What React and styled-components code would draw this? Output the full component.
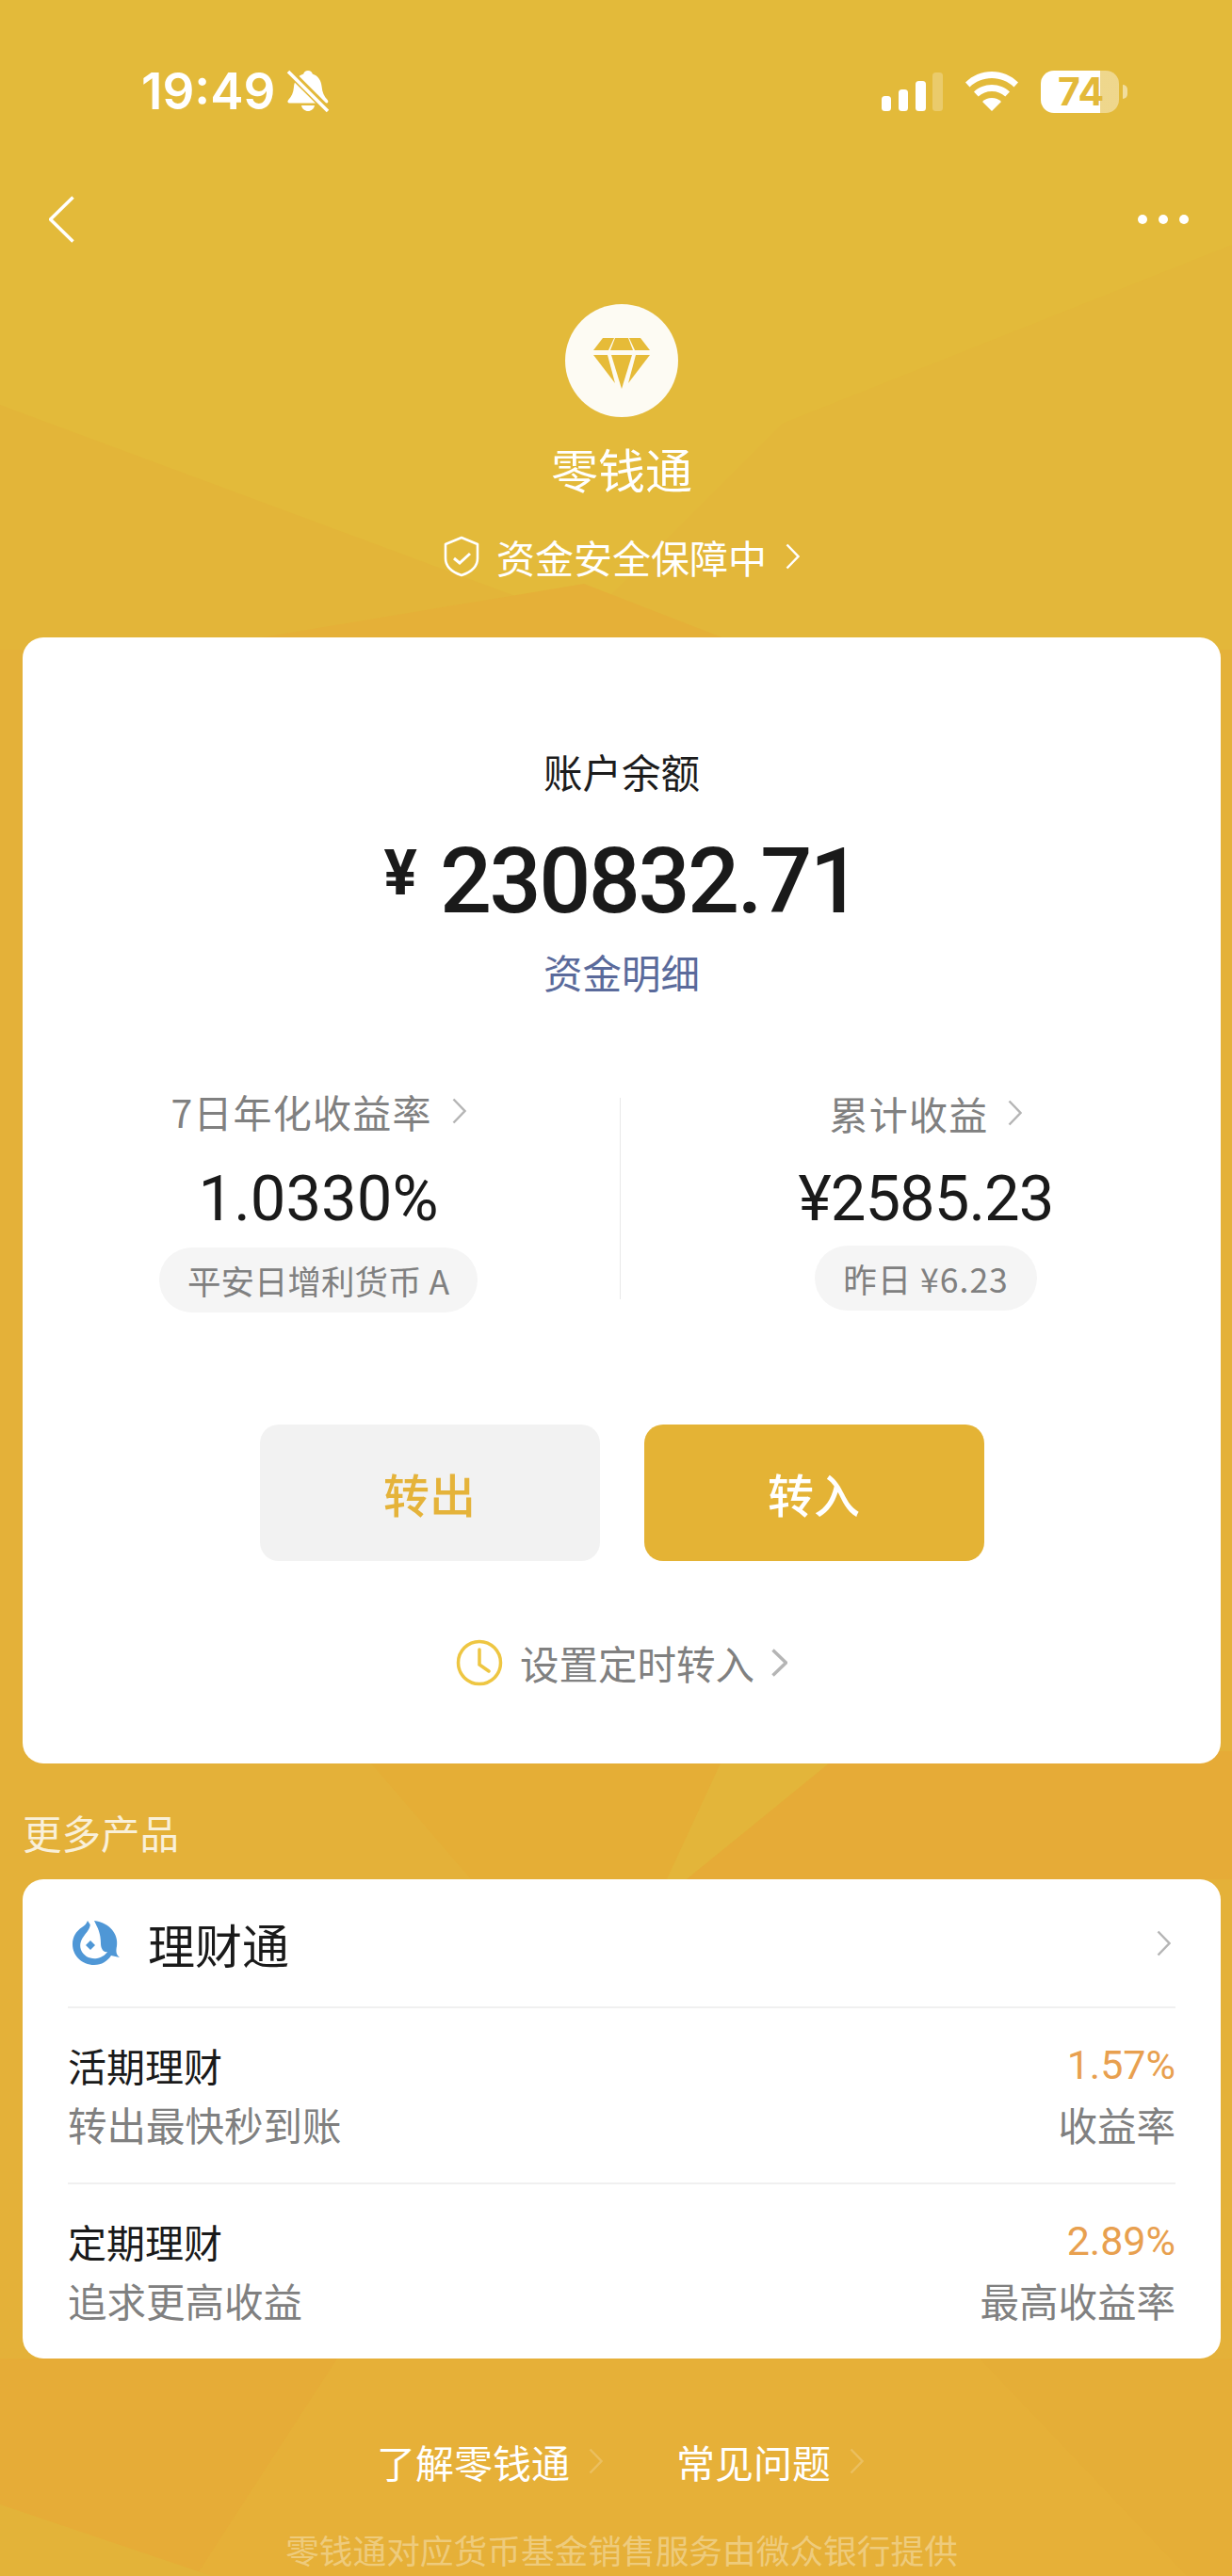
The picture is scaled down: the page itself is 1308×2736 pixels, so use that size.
import React from "react";
import styled, { createGlobalStyle } from "styled-components";

const Global = createGlobalStyle`
  html, body { margin: 0; padding: 0; background: #E5B238; }
  * { box-sizing: border-box; }
`;

const CJK = `"Noto Sans CJK SC", "Noto Sans", sans-serif`;
const NUM = `Roboto, "Noto Sans CJK SC", sans-serif`;

const Page = styled.div`
  position: relative;
  width: 1308px;
  height: 2736px;
  overflow: hidden;
  font-family: ${CJK};
  background: linear-gradient(180deg, #E3BA3A 0 690px, #E4B139 690px 2505px, #E6B038 2505px 100%);
`;
const Backdrop = styled.svg`
  position: absolute;
  inset: 0;
  width: 1308px;
  height: 2736px;
`;
const Content = styled.div`
  position: relative;
  display: flex;
  flex-direction: column;
`;

const StatusBar = styled.div`
  height: 190px;
  padding: 73px 120px 0 150px;
  display: flex;
  justify-content: space-between;
  align-items: flex-start;
`;
const StatusLeft = styled.div`
  display: flex;
  align-items: center;
  gap: 12px;
  height: 48px;
`;
const Clock = styled.span`
  font-family: Inter, sans-serif;
  font-weight: 600;
  font-size: 53px;
  line-height: 48px;
  color: #fff;
`;
const StatusRight = styled.div`
  display: flex;
  align-items: center;
  height: 48px;
  gap: 23px;
`;
const Battery = styled.div`
  position: relative;
  width: 83px;
  height: 45px;
  border-radius: 14px;
  background: linear-gradient(90deg, #fff 0 76%, rgba(255,255,255,.42) 76% 100%);
  display: flex;
  align-items: center;
  padding-left: 18px;
  font-family: Inter, sans-serif;
  font-weight: 700;
  font-size: 41px;
  color: #E3B93A;
  &::after {
    content: "";
    position: absolute;
    left: 87px;
    top: 15px;
    width: 5px;
    height: 15px;
    border-radius: 0 5px 5px 0;
    background: rgba(255,255,255,.5);
  }
`;

const Nav = styled.div`
  height: 86px;
  padding: 0 46px 0 52px;
  display: flex;
  justify-content: space-between;
  align-items: center;
`;
const Dots = styled.div`
  display: flex;
  gap: 12px;
`;
const Dot = styled.i`
  width: 10px;
  height: 10px;
  border-radius: 50%;
  background: #fff;
`;

const Hero = styled.div`
  display: flex;
  flex-direction: column;
  align-items: center;
  padding: 47px 0 0 12px;
`;
const LogoCircle = styled.div`
  width: 120px;
  height: 120px;
  border-radius: 50%;
  background: #FDFBF3;
  display: flex;
  align-items: center;
  justify-content: center;
  padding-top: 6px;
`;
const HeroTitle = styled.div`
  margin-top: 24px;
  font-size: 50px;
  line-height: 60px;
  color: #fff;
`;
const Safety = styled.div`
  margin-top: 39px;
  height: 50px;
  display: flex;
  align-items: center;
  font-size: 41px;
  line-height: 50px;
  color: #fff;
`;

const Card = styled.div`
  margin: 0 12px 0 24px;
  background: #fff;
  border-radius: 22px;
`;
const BalanceCard = styled(Card)`
  margin-top: 61px;
  height: 1196px;
  padding-top: 117px;
  display: flex;
  flex-direction: column;
  align-items: center;
`;
const BalanceLabel = styled.div`
  font-size: 41.500px;
  line-height: 50px;
  color: #1c1c1c;
`;
const Amount = styled.div`
  margin-top: 37px;
  display: flex;
  align-items: center;
  gap: 24px;
  height: 110px;
  font-family: ${NUM};
  color: #1a1a1a;
`;
const AmountYen = styled.span`
  font-size: 66px;
  font-weight: 700;
  line-height: 110px;
  position: relative;
  top: -8px;
`;
const AmountValue = styled.span`
  font-size: 97px;
  font-weight: 500;
  line-height: 110px;
  letter-spacing: -2.500px;
`;
const DetailLink = styled.div`
  margin-top: 16px;
  font-size: 41.500px;
  line-height: 50px;
  color: #5A6A9B;
`;

const Stats = styled.div`
  margin-top: 98px;
  width: 100%;
  display: grid;
  grid-template-columns: 628px 1px 1fr;
  column-gap: 6px;
`;
const StatCol = styled.div`
  display: flex;
  flex-direction: column;
  align-items: center;
  padding-top: ${p => p.$right ? 2 : 0}px;
  padding-left: ${p => p.$right ? 5 : 0}px;
`;
const StatDivider = styled.div`
  margin-top: 11px;
  height: 214px;
  background: #E9E9E9;
`;
const StatLabel = styled.div`
  height: 50px;
  display: flex;
  align-items: center;
  gap: 21px;
  font-size: 41px;
  line-height: 50px;
  letter-spacing: 1.200px;
  color: #808080;
`;
const StatValue = styled.div`
  margin-top: ${p => p.$right ? 26 : 28}px;
  font-family: ${NUM};
  font-size: 67px;
  line-height: 80px;
  font-weight: 400;
  letter-spacing: ${p => p.$right ? -1 : 0}px;
  color: #1a1a1a;
`;
const Pill = styled.div`
  margin-top: ${p => p.$right ? 10 : 12}px;
  height: 69px;
  padding: 0 30px;
  border-radius: 35px;
  background: #F5F5F5;
  display: flex;
  align-items: center;
  font-size: 35.500px;
  letter-spacing: ${p => p.$right ? 1 : 0}px;
  color: #808080;
`;

const Actions = styled.div`
  margin-top: 119px;
  display: flex;
  gap: 47px;
`;
const ActionButton = styled.div`
  width: 361px;
  height: 145px;
  border-radius: 20px;
  display: flex;
  align-items: center;
  justify-content: center;
  font-size: 49px;
  font-weight: 500;
  background: ${p => p.$primary ? "#E4B335" : "#F2F2F2"};
  color: ${p => p.$primary ? "#fff" : "#E5B33A"};
`;
const ScheduleRow = styled.div`
  margin-top: 83px;
  height: 50px;
  display: flex;
  align-items: center;
  gap: 18px;
  font-size: 41.500px;
  line-height: 50px;
  color: #808080;
`;

const SectionLabel = styled.div`
  margin-top: 48px;
  padding-left: 24px;
  font-size: 41.500px;
  line-height: 50px;
  color: rgba(255,255,255,.82);
`;
const ProductCard = styled(Card)`
  margin-top: 25px;
  height: 509px;
  padding: 0 48px;
`;
const ProductHead = styled.div`
  height: 135px;
  padding: 0 5px;
  display: flex;
  align-items: center;
  gap: 30px;
`;
const ProductName = styled.div`
  flex: 1;
  font-size: 50px;
  line-height: 60px;
  color: #1a1a1a;
`;
const ProductRow = styled.div`
  height: 187px;
  border-top: 2px solid #F0F0F0;
  padding-top: 35px;
  display: grid;
  grid-template-columns: 1fr auto;
  grid-auto-rows: 50px;
  align-content: start;
  row-gap: 13px;
`;
const RowTitle = styled.div`
  font-size: 41px;
  line-height: 50px;
  color: #1a1a1a;
`;
const RowRate = styled.div`
  font-family: ${NUM};
  font-size: 43px;
  line-height: 50px;
  text-align: right;
  color: #E8A04F;
`;
const RowSub = styled.div`
  font-size: 41.500px;
  line-height: 50px;
  color: #808080;
  text-align: ${p => p.$end ? "right" : "left"};
`;

const FooterLinks = styled.div`
  margin-top: 84px;
  height: 50px;
  padding-left: 400px;
  display: flex;
  align-items: center;
  font-size: 41px;
  line-height: 50px;
  color: #fff;
`;
const FooterLink = styled.div`
  display: flex;
  align-items: center;
  gap: 20px;
  margin-right: 78px;
`;
const FooterNote = styled.div`
  margin-top: 44px;
  padding-left: 12px;
  text-align: center;
  font-size: 35.700px;
  line-height: 50px;
  color: rgba(255,255,255,.36);
`;

const Chevron = ({ w = 15, h = 28, color = "#fff", sw = 2.5, dir = "right", ...r }) => (
  <svg width={w} height={h} viewBox={`0 0 ${w} ${h}`} fill="none" {...r}>
    <polyline
      points={dir === "right" ? `1.5,1.5 ${w - 1.5},${h / 2} 1.5,${h - 1.5}` : `${w - 1.5},1.5 1.5,${h / 2} ${w - 1.5},${h - 1.5}`}
      stroke={color}
      strokeWidth={sw}
    />
  </svg>
);

const BellOff = () => (
  <svg width="46" height="46" viewBox="0 0 46 46">
    <path d="M23 1c2.6 0 4.4 1.6 4.8 3.6C34 6.6 37 12 37.6 18c.5 6 2.6 10.600 6 14 1.300 1.400 1 3.500-1 3.500H3.500c-2.300 0-2.700-2.100-1.300-3.500 3.400-3.400 5.300-7.500 5.700-13C8.400 12 12 6.500 18.200 4.600 18.600 2.600 20.400 1 23 1z" fill="#fff" />
    <path d="M16 38h14c-.6 3.600-3.600 6-7 6s-6.400-2.400-7-6z" fill="#fff" />
    <line x1="2" y1="1" x2="45" y2="44" stroke="#E3B93A" strokeWidth="8" />
    <line x1="2" y1="2" x2="44" y2="44" stroke="#fff" strokeWidth="3.500" />
  </svg>
);

const Signal = () => (
  <svg width="65" height="41" viewBox="0 0 65 41">
    <rect x="0" y="25" width="10" height="16" rx="3.500" fill="#fff" />
    <rect x="18" y="18" width="10" height="23" rx="3.500" fill="#fff" />
    <rect x="36" y="9" width="11" height="32" rx="3.500" fill="#fff" />
    <rect x="54" y="0" width="11" height="41" rx="3.500" fill="#fff" fillOpacity=".25" />
  </svg>
);

const Wifi = () => (
  <svg width="58" height="42" viewBox="0 0 58 42">
    <path d="M29 0C18 0 8.500 4.200 1 11.500l4.500 5C11.800 10.500 20 7 29 7s17.200 3.500 23.500 9.500l4.500-5C49.500 4.200 40 0 29 0z" fill="#fff" />
    <path d="M29 14c-7.500 0-14 2.800-19 7.500l4.700 5C18.500 23 23.500 21 29 21s10.500 2 14.300 5.500l4.700-5C43 16.800 36.500 14 29 14z" fill="#fff" />
    <path d="M29 28c-3.900 0-7.500 1.400-10 3.900L29 42l10-10.100C36.500 29.400 32.900 28 29 28z" fill="#fff" />
  </svg>
);

const Diamond = () => (
  <svg width="60" height="54" viewBox="0 0 60 54" fill="#E6BB38">
    <polygon points="10,0 22,0 16,13 0,13" />
    <polygon points="23,0 37,0 42,13 18,13" />
    <polygon points="38,0 50,0 60,13 44,13" />
    <polygon points="0,18 15,18 23,48" />
    <polygon points="19,18 41,18 30,54" />
    <polygon points="45,18 60,18 37,48" />
  </svg>
);

const Shield = () => (
  <svg width="38" height="44" viewBox="0 0 38 44" fill="none" stroke="#fff" strokeWidth="2.600" style={{ marginRight: 18 }}>
    <path d="M19 2 L36 9 V24 C36 33 28 39 19 42 C10 39 2 33 2 24 V9 Z" strokeLinejoin="round" />
    <polyline points="11,24 17,29 28,19" strokeWidth="3" />
  </svg>
);

const ClockIcon = () => (
  <svg width="50" height="50" viewBox="0 0 50 50" fill="none" stroke="#EEC642" strokeWidth="3.500">
    <circle cx="25" cy="25" r="22.500" />
    <polyline points="25,11 25,27 35,34" strokeLinecap="round" />
  </svg>
);

const LctLogo = () => (
  <svg width="50" height="48" viewBox="0 0 50 48">
    <path d="M16 0 C15 3 13 5 10 7 C4 11 0 17 0 25 C0 37 10 47 23 47 C31 47 37 43 41 37 C44 38 47 38 50 39 C46 36 46 32 47 27 C49 15 40 2 23 0 C25 4 26 8 24 12 L16 0 Z" fill="#4F97D6" />
    <path d="M19 2 C19 8 16 11 13 15 C9 20 7 25 9 31 C12 38 19 41 26 40 C32 39 36 35 37 33 C33 34 30 30 30 24 C30 14 27 7 23 1 Z" fill="#fff" />
    <polygon points="19,21 24,26 19,31 14,26" fill="#4F97D6" />
  </svg>
);

const Rate = ({ title, sub, rate, rateLabel }) => (
  <ProductRow>
    <RowTitle>{title}</RowTitle>
    <RowRate>{rate}</RowRate>
    <RowSub>{sub}</RowSub>
    <RowSub $end>{rateLabel}</RowSub>
  </ProductRow>
);

export default function App() {
  return (
    <Page>
      <Global />
      <Backdrop viewBox="0 0 1308 2736" aria-hidden="true">
        <polygon points="0,430 620,660 660,690 0,690" fill="#E3B539" />
        <polygon points="1308,260 830,450 620,660 660,690 1308,690" fill="#E3B73A" />
        <polygon points="200,690 620,620 800,690" fill="#E5B038" />
        <polygon points="383,1860 771,1860 708,1996 500,1996" fill="#E5AE36" />
        <polygon points="771,1860 896,1860 729,1996 708,1996" fill="#E3B53A" />
        <polygon points="896,1860 1308,1860 1308,1996 729,1996" fill="#E6AB37" />
        <polygon points="0,2505 358,2505 208,2736 0,2736" fill="#E6AC37" />
        <polygon points="0,2660 225,2736 0,2736" fill="#E3B339" />
        <polygon points="1040,2505 1308,2505 1308,2736 1260,2736" fill="#E5AE37" />
      </Backdrop>
      <Content>
        <StatusBar>
          <StatusLeft>
            <Clock>19:49</Clock>
            <BellOff />
          </StatusLeft>
          <StatusRight>
            <Signal />
            <Wifi />
            <Battery>74</Battery>
          </StatusRight>
        </StatusBar>
        <Nav>
          <Chevron dir="left" w={27} h={50} sw={3.500} />
          <Dots><Dot /><Dot /><Dot /></Dots>
        </Nav>
        <Hero>
          <LogoCircle><Diamond /></LogoCircle>
          <HeroTitle>零钱通</HeroTitle>
          <Safety>
            <Shield />
            资金安全保障中
            <Chevron style={{ marginLeft: 20 }} />
          </Safety>
        </Hero>
        <BalanceCard>
          <BalanceLabel>账户余额</BalanceLabel>
          <Amount>
            <AmountYen>¥</AmountYen>
            <AmountValue>230832.71</AmountValue>
          </Amount>
          <DetailLink>资金明细</DetailLink>
          <Stats>
            <StatCol>
              <StatLabel>7日年化收益率<Chevron color="#B5B5B5" /></StatLabel>
              <StatValue>1.0330%</StatValue>
              <Pill>平安日增利货币 A</Pill>
            </StatCol>
            <StatDivider />
            <StatCol $right>
              <StatLabel>累计收益<Chevron color="#B5B5B5" /></StatLabel>
              <StatValue $right>¥2585.23</StatValue>
              <Pill $right>昨日 ¥6.23</Pill>
            </StatCol>
          </Stats>
          <Actions>
            <ActionButton>转出</ActionButton>
            <ActionButton $primary>转入</ActionButton>
          </Actions>
          <ScheduleRow>
            <ClockIcon />
            设置定时转入
            <Chevron w={17} h={30} color="#B5B5B5" sw={3.500} />
          </ScheduleRow>
        </BalanceCard>
        <SectionLabel>更多产品</SectionLabel>
        <ProductCard>
          <ProductHead>
            <LctLogo />
            <ProductName>理财通</ProductName>
            <Chevron color="#B5B5B5" />
          </ProductHead>
          <Rate title="活期理财" sub="转出最快秒到账" rate="1.57%" rateLabel="收益率" />
          <Rate title="定期理财" sub="追求更高收益" rate="2.89%" rateLabel="最高收益率" />
        </ProductCard>
        <FooterLinks>
          <FooterLink>了解零钱通<Chevron color="rgba(255,255,255,.2)" /></FooterLink>
          <FooterLink>常见问题<Chevron color="rgba(255,255,255,.2)" /></FooterLink>
        </FooterLinks>
        <FooterNote>零钱通对应货币基金销售服务由微众银行提供</FooterNote>
      </Content>
    </Page>
  );
}
